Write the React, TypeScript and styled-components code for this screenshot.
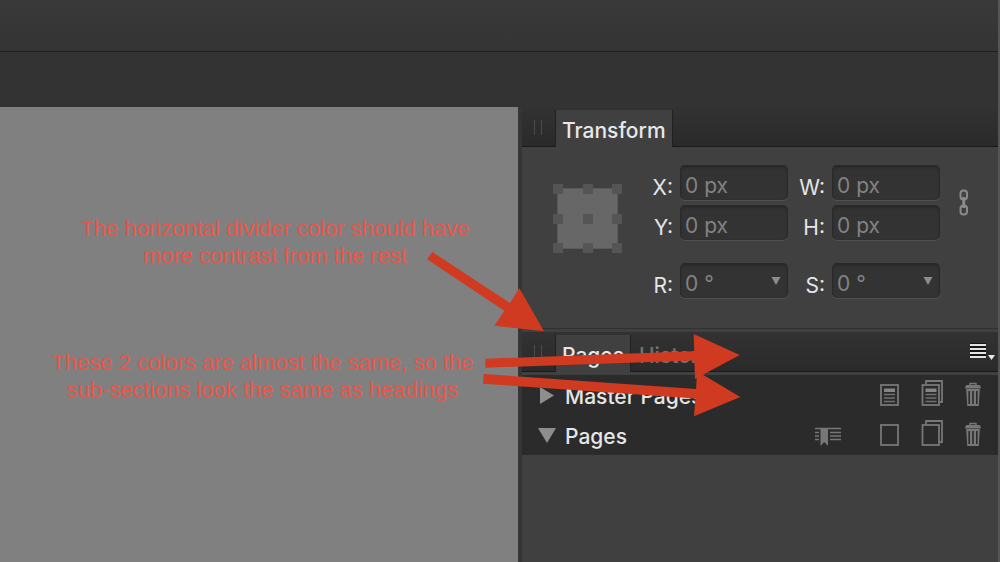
import React from "react";
import styled, { createGlobalStyle } from "styled-components";

const GlobalStyle = createGlobalStyle`
  *, *::before, *::after { box-sizing: border-box; }
  body {
    margin: 0;
    background: #333333;
    font-family: Inter, "Liberation Sans", sans-serif;
    font-size: 21px;
    color: #e6e6e6;
  }
  button, input, select { font: inherit; color: inherit; }
`;

const Window = styled.div`
  position: relative;
  display: flex;
  flex-direction: column;
  min-height: 100vh;
  overflow: hidden;
  border-right: 2px solid #555555;
`;

const Toolbar = styled.header`
  height: 52px;
  background: linear-gradient(#393939, #343434);
  border-bottom: 1px solid #202020;
`;

const ContextBar = styled.div`
  height: 55px;
  background: #333333;
`;

const Workspace = styled.div`
  display: flex;
  flex: 1;
`;

const Canvas = styled.main`
  flex: 1;
  background: #808080;
`;

const Studio = styled.aside`
  width: 480px;
  flex: none;
  border-left: 4px solid #353535;
  background: #404040;
`;

const TabBar = styled.div`
  display: flex;
  height: 40px;
  padding-top: 3px;
  background: linear-gradient(#323232, #2a2a2a);
  box-shadow: inset 0 -1px #191919;
`;

const Grip = styled.span`
  width: 8px;
  height: 15px;
  margin: 10px 14px 0 12px;
  border: solid #4c4c4c;
  border-width: 0 1px;
`;

const Tabs = styled.div`
  display: flex;
  gap: 3px;
`;

const Tab = styled.button<{ $active?: boolean }>`
  height: 37px;
  padding: 5px 6px 0;
  border: 0;
  line-height: 32px;
  font-weight: 500;
  background: ${(p) => (p.$active ? "#404040" : "transparent")};
  color: ${(p) => (p.$active ? "#e8e8e8" : "#747474")};
  box-shadow: ${(p) => (p.$active ? "-1px 0 #202020, 1px 0 #202020" : "none")};
`;

const PanelMenu = styled.button`
  display: flex;
  margin: 8px 2px 0 auto;
  padding: 0;
  border: 0;
  height: 18px;
  background: none;
`;

const TransformBody = styled.section`
  display: flex;
  align-items: flex-start;
  padding: 18px 29px 30px 31px;
  border-bottom: 1px solid #303030;
`;

const AnchorPicker = styled.svg`
  flex: none;
  margin-top: 19px;
`;

const Fields = styled.div`
  flex: 1;
  display: grid;
  grid-template-columns: 58px 108px 44px 108px;
  row-gap: 5px;
`;

const FieldLabel = styled.label<{ $spaced?: boolean }>`
  margin-top: ${(p) => (p.$spaced ? "18px" : "0")};
  padding: 11px 7px 0 0;
  line-height: 24px;
  text-align: right;
  white-space: nowrap;
`;

const Field = styled.input`
  width: 100%;
  height: 35px;
  padding: 6px 4px 0;
  border: 1px solid #292929;
  border-bottom-color: #303030;
  border-radius: 5px;
  background: #333333;
  color: #828282;
  box-shadow: inset 0 2px 2px #2a2a2a, 0 1px #505050;
`;

const SelectBox = styled.div`
  display: grid;
  margin-top: 18px;
  align-items: center;

  & > * { grid-area: 1 / 1; }
  & > svg { justify-self: end; margin-right: 7px; pointer-events: none; }
`;

const Select = styled(Field).attrs({ as: "select" })`
  appearance: none;
`;

const LinkButton = styled.button`
  margin: 24px 0 0 19px;
  padding: 0;
  border: 0;
  height: 28px;
  background: none;
`;

const Divider = styled.div`
  height: 3px;
  background: #404040;
`;

const Section = styled.div`
  display: flex;
  align-items: center;
  height: 40px;
  padding: 0 17px 0 15px;
  background: #2b2b2b;
`;

const SectionToggle = styled.button`
  display: flex;
  align-items: center;
  gap: 8px;
  padding: 3px 0 0;
  border: 0;
  background: none;
  font-weight: 500;
  line-height: 26px;
`;

const SectionTools = styled.div`
  display: flex;
  gap: 22px;
  margin-left: auto;
`;

const ToolButton = styled.button<{ $apart?: boolean }>`
  display: flex;
  margin: 0 ${(p) => (p.$apart ? "17px" : "0")} 4px 0;
  padding: 0;
  border: 0;
  background: none;
  color: #777777;
`;

const Note = styled.p<{ $x: number; $y: number; $width: number }>`
  position: absolute;
  left: ${(p) => p.$x}px;
  top: ${(p) => p.$y}px;
  width: ${(p) => p.$width}px;
  margin: 0;
  font-family: "Liberation Sans", Arial, sans-serif;
  font-size: 22px;
  line-height: 27px;
  text-align: center;
  white-space: nowrap;
  color: #e8564a;
`;

const Arrows = styled.svg`
  position: absolute;
  left: 0;
  top: 0;
  pointer-events: none;
`;

const Caret = () => (
  <svg width="10" height="8" viewBox="0 0 10 8" aria-hidden="true">
    <path d="M0.5 0H9.5L5 8Z" fill="#8c8c8c" />
  </svg>
);

const Anchor = () => (
  <AnchorPicker width="69" height="69" viewBox="0 0 69 69" role="img" aria-label="Anchor point">
    <rect x="4.5" y="4.5" width="60" height="60" fill="#676767" stroke="#595959" />
    {[0, 30, 59].map((y) =>
      [0, 30, 59].map((x) => (
        <rect key={`${x}-${y}`} x={x} y={y} width="10" height="10" fill="#555555" />
      ))
    )}
  </AnchorPicker>
);

const ChainIcon = () => (
  <svg width="10" height="27" viewBox="0 0 10 27" fill="none" stroke="#8a8a8a" strokeWidth="2">
    <rect x="1.5" y="1.5" width="6.5" height="9" rx="3" />
    <rect x="1.5" y="16.5" width="6.5" height="9" rx="3" />
    <path d="M4.75 8V19" strokeWidth="3" />
  </svg>
);

const MenuIcon = () => (
  <svg width="26" height="18" viewBox="0 0 26 18" aria-hidden="true">
    <path d="M0 0H16V15H0Z" fill="#161616" />
    <path d="M0 2H16M0 6H16M0 10H16M0 14H16" stroke="#e4e4e4" strokeWidth="2" />
    <path d="M18 12H25L21.5 17Z" fill="#e8e8e8" />
  </svg>
);

const PageLines = ({ x }: { x: number }) => (
  <g transform={`translate(${x} 0)`}>
    <path d="M0 8.5H11V12H0Z" fill="#858585" />
    <path d="M0 14.5H11M0 18H11M0 21.5H11" stroke="#707070" strokeWidth="1.4" />
  </g>
);

const PageIcon = ({ filled }: { filled?: boolean }) => (
  <svg width="19" height="26" viewBox="0 0 19 26" aria-hidden="true">
    <rect x="1" y="5" width="17" height="20" fill="none" stroke="currentColor" strokeWidth="1.8" />
    {filled && <PageLines x={4} />}
  </svg>
);

const PagesIcon = ({ filled }: { filled?: boolean }) => (
  <svg width="22" height="26" viewBox="0 0 22 26" aria-hidden="true">
    <path d="M5 4V1H21V22H19" fill="none" stroke="currentColor" strokeWidth="1.8" />
    <rect x="1.5" y="5" width="16.5" height="20" fill="none" stroke="currentColor" strokeWidth="1.8" />
    {filled && <PageLines x={4.5} />}
  </svg>
);

const TrashIcon = () => (
  <svg width="16" height="26" viewBox="0 0 16 26" aria-hidden="true">
    <path d="M5 5V3.5H11V5" fill="none" stroke="currentColor" strokeWidth="1.4" />
    <path d="M2 5H14Q15.8 5.2 15.8 8.5H0.2Q0.2 5.2 2 5Z" fill="currentColor" />
    <path
      d="M1.2 9H14.8L13.8 26H2.2ZM3.4 11V24H5V11ZM7.2 11V24H8.8V11ZM11 11V24H12.6V11Z"
      fill="currentColor"
      fillRule="evenodd"
    />
  </svg>
);

const BookmarkIcon = () => (
  <svg width="26" height="26" viewBox="0 0 26 26" aria-hidden="true">
    <path d="M0 8.5H26M0 12.5H4M0 16H4M0 19.5H4M15 12.5H26M15 16H26M15 19.5H26" stroke="currentColor" strokeWidth="1.4" />
    <path d="M5.5 8H13V26L9.25 22L5.5 26Z" fill="currentColor" />
  </svg>
);

const Disclosure = ({ open }: { open?: boolean }) => (
  <svg width="20" height="20" viewBox="0 0 20 20" aria-hidden="true">
    <path d={open ? "M1 1H19L10 16Z" : "M3 0L17 8.5L3 17Z"} fill="#8e8e8e" />
  </svg>
);

const dimensions = ["X", "W", "Y", "H"];
const angles = ["R", "S"];

export default function App() {
  return (
    <Window>
      <GlobalStyle />
      <Toolbar />
      <ContextBar />
      <Workspace>
        <Canvas />
        <Studio>
          <TabBar>
            <Grip />
            <Tabs>
              <Tab $active>Transform</Tab>
            </Tabs>
          </TabBar>
          <TransformBody>
            <Anchor />
            <Fields>
              {dimensions.map((name) => (
                <React.Fragment key={name}>
                  <FieldLabel htmlFor={name}>{name}:</FieldLabel>
                  <Field id={name} defaultValue="0 px" />
                </React.Fragment>
              ))}
              {angles.map((name) => (
                <React.Fragment key={name}>
                  <FieldLabel htmlFor={name} $spaced>{name}:</FieldLabel>
                  <SelectBox>
                    <Select id={name}>
                      <option>0 °</option>
                    </Select>
                    <Caret />
                  </SelectBox>
                </React.Fragment>
              ))}
            </Fields>
            <LinkButton aria-label="Lock aspect ratio">
              <ChainIcon />
            </LinkButton>
          </TransformBody>
          <Divider />
          <TabBar>
            <Grip />
            <Tabs>
              <Tab $active>Pages</Tab>
              <Tab>History</Tab>
            </Tabs>
            <PanelMenu aria-label="Panel menu">
              <MenuIcon />
            </PanelMenu>
          </TabBar>
          <Divider />
          <Section>
            <SectionToggle>
              <Disclosure />
              Master Pages
            </SectionToggle>
            <SectionTools>
              <ToolButton aria-label="Add master"><PageIcon filled /></ToolButton>
              <ToolButton aria-label="Duplicate master"><PagesIcon filled /></ToolButton>
              <ToolButton aria-label="Delete master"><TrashIcon /></ToolButton>
            </SectionTools>
          </Section>
          <Section>
            <SectionToggle>
              <Disclosure open />
              Pages
            </SectionToggle>
            <SectionTools>
              <ToolButton aria-label="Start section" $apart><BookmarkIcon /></ToolButton>
              <ToolButton aria-label="Add page"><PageIcon /></ToolButton>
              <ToolButton aria-label="Duplicate page"><PagesIcon /></ToolButton>
              <ToolButton aria-label="Delete page"><TrashIcon /></ToolButton>
            </SectionTools>
          </Section>
        </Studio>
      </Workspace>
      <Note $x={75} $y={215} $width={400}>
        The horizontal divider color should have
        <br />
        more contrast from the rest
      </Note>
      <Note $x={47} $y={349} $width={431}>
        These 2 colors are almost the same, so the
        <br />
        sub-sections look the same as headings
      </Note>
      <Arrows width="760" height="430" viewBox="0 0 760 430" fill="#d03a20" aria-hidden="true">
        <path d="M432.3 252L510 303L519.3 288L544 331.3L494.3 325.7L504.3 310.7L427 259.3Z" />
        <path d="M485.3 358.7L694.2 351.3L693.7 334L739.7 355L695 379L694.4 360.6L485.3 367.7Z" />
        <path d="M483.7 374L696 389L697.2 371.3L740.3 397L694 416.3L695.4 398.6L483 383.7Z" />
      </Arrows>
    </Window>
  );
}
